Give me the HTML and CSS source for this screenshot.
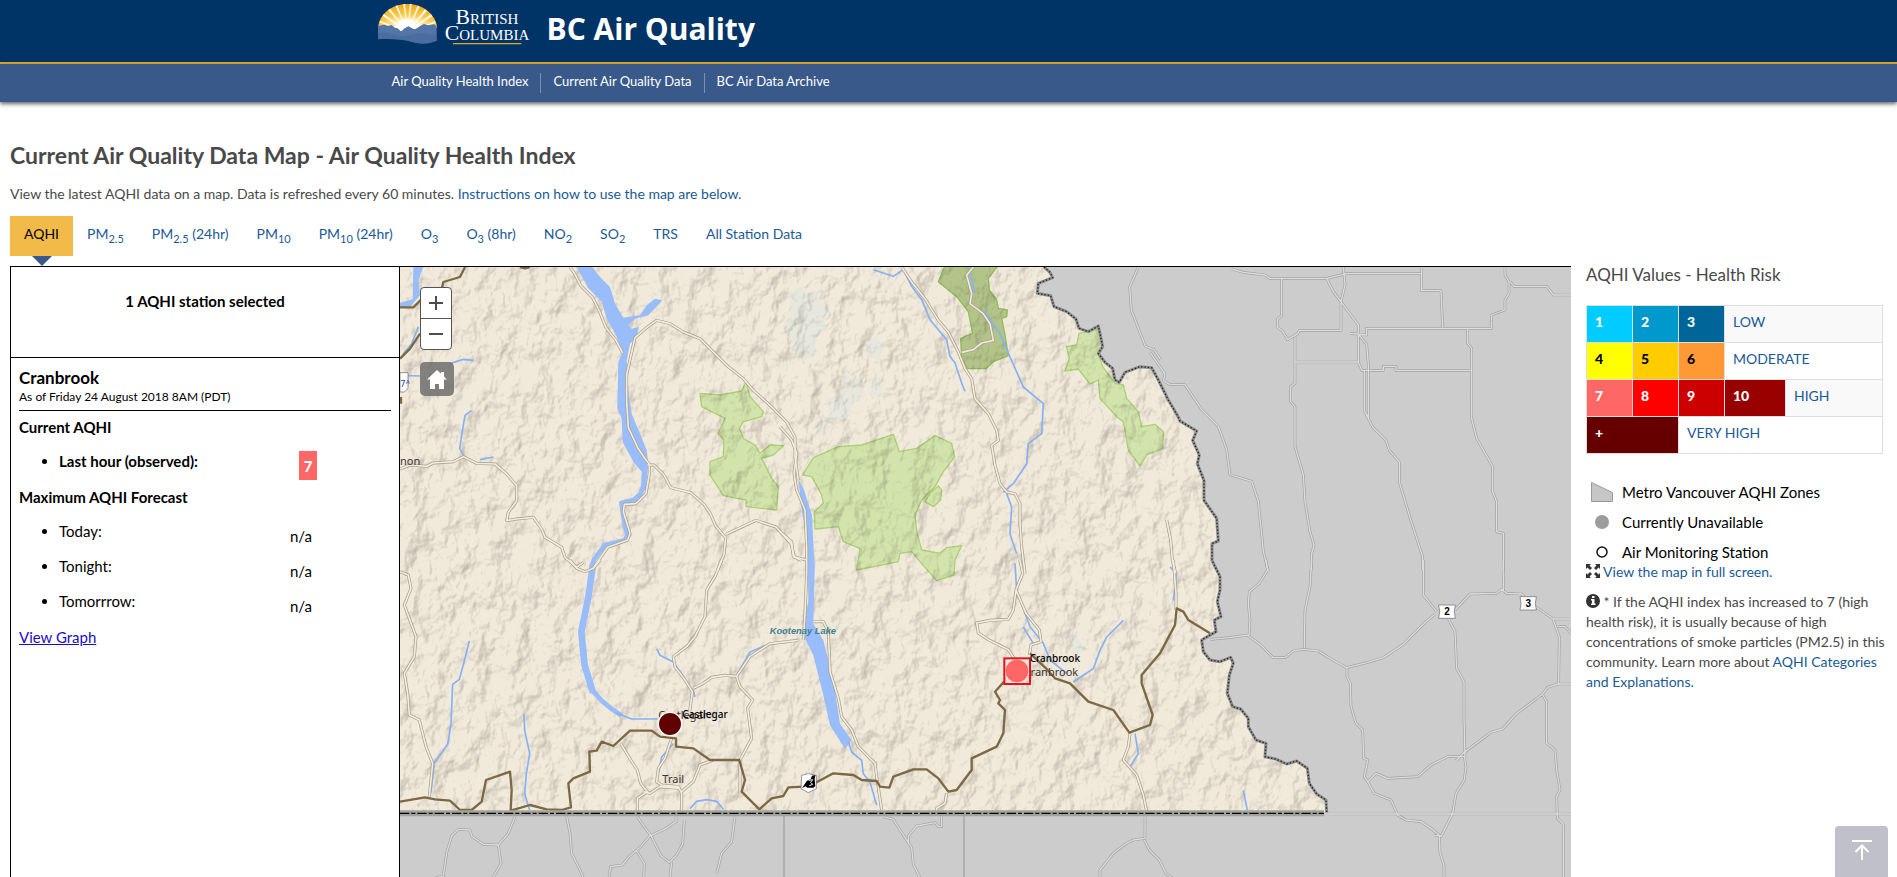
FILE: index.html
```
<!DOCTYPE html>
<html lang="en">
<head>
    <meta charset="UTF-8">
    <meta name="viewport" content="width=device-width, initial-scale=1.0">
    <title>BC Air Quality</title>
    <link rel="stylesheet" href="styles.css">
</head>
<body>
    <header class="header">
        <div class="container brand">
            <a href="#" class="logo" aria-label="British Columbia">
                <svg width="155" height="42" viewBox="0 0 465 126">
                    <defs>
                        <radialGradient id="sun" cx="50%" cy="85%" r="85%">
                            <stop offset="0.2" stop-color="#fff6c8"/>
                            <stop offset="0.5" stop-color="#fbc94a"/>
                            <stop offset="1" stop-color="#f0a81c"/>
                        </radialGradient>
                    </defs>
                    <path fill="url(#sun)" d="M0 72C4 30 40 0 88 0s84 30 90 72z"/>
                    <path fill="#fff" d="M88 84L6 50l-2 5zM88 84L18 30l-4 5zM88 84L36 14l-5 4zM88 84L58 4l-5 2zM88 84L81 0h-5zM88 84L96 0h5zM88 84l31-79 5 3zM88 84l53-68 5 5zM88 84l71-53 3 6zM88 84l83-32 2 5z"/>
                    <circle cx="88" cy="72" r="28" fill="#fff"/>
                    <path fill="#5475a7" d="M0 66l18-4 12 4 10-3 12 8 8 3 10 8 8-8 12-8 10 5 8 5 14-8 16-8 12 4 18-3 8 5v44c-24 10-46 12-74 4-30-8-62-10-102-8z"/>
                    <path fill="#fff" d="M48 70l12 3 8 8 10-8 14-7 10 6 12 2 14-10-14-4-20-12-12 2-10-4-12 10z"/>
                    <path fill="#3d5d93" d="M0 88c30-10 60 14 90 6s60-10 88 2v14c-24 10-46 12-74 4-30-8-62-10-104-8z" opacity=".35"/>
                    <text class="logo-text" x="327" y="61" text-anchor="middle">British</text>
                    <text class="logo-text" x="327" y="107" text-anchor="middle">Columbia</text>
                    <path fill="#e3a82b" d="M225 117h205v4H225z"/>
                </svg>
            </a>
            <span class="site-title">BC Air Quality</span>
        </div>
    </header>
    <nav class="main-nav">
        <ul class="container">
            <li><a href="#">Air Quality Health Index</a></li>
            <li><a href="#">Current Air Quality Data</a></li>
            <li><a href="#">BC Air Data Archive</a></li>
        </ul>
    </nav>

    <main class="content">
        <h1>Current Air Quality Data Map - Air Quality Health Index</h1>
        <p class="intro">View the latest AQHI data on a map. Data is refreshed every 60 minutes. <a href="#">Instructions on how to use the map are below.</a></p>

        <ul class="tabs">
            <li class="active"><a href="#">AQHI</a></li>
            <li><a href="#">PM<sub>2.5</sub></a></li>
            <li><a href="#">PM<sub>2.5</sub> (24hr)</a></li>
            <li><a href="#">PM<sub>10</sub></a></li>
            <li><a href="#">PM<sub>10</sub> (24hr)</a></li>
            <li><a href="#">O<sub>3</sub></a></li>
            <li><a href="#">O<sub>3</sub> (8hr)</a></li>
            <li><a href="#">NO<sub>2</sub></a></li>
            <li><a href="#">SO<sub>2</sub></a></li>
            <li><a href="#">TRS</a></li>
            <li><a href="#">All Station Data</a></li>
        </ul>

        <div class="columns">
            <section class="station-panel">
                <div class="panel-head">1 AQHI station selected</div>
                <div class="panel-body">
                    <h2>Cranbrook</h2>
                    <p class="as-of">As of Friday 24 August 2018 8AM (PDT)</p>
                    <h3>Current AQHI</h3>
                    <ul>
                        <li><div class="reading now"><b>Last hour (observed):</b><span class="badge">7</span></div></li>
                    </ul>
                    <h3>Maximum AQHI Forecast</h3>
                    <ul>
                        <li><div class="reading"><span>Today:</span><span>n/a</span></div></li>
                        <li><div class="reading"><span>Tonight:</span><span>n/a</span></div></li>
                        <li><div class="reading"><span>Tomorrrow:</span><span>n/a</span></div></li>
                    </ul>
                    <a href="#" class="graph-link">View Graph</a>
                </div>
            </section>

            <section class="map">
                <svg class="map-canvas" viewBox="0 0 3513 1830" preserveAspectRatio="xMinYMin slice">
                    <defs>
                        <path id="province" d="M1932 0l18 16 8 16-43 17-3 30 40 7 10 33 38 15 28 22 9 28 28 10 30-17 7 32 6 30-13 20 20 27 23 18 7 35 13 7 17-30 45-17 35 3 20 37 30 60 30 51 5 12 50 30-12 28 20 44-6 26 20 50v60l38 54 5 68-19 8v50l24 49v40l-8 35 11 45-20 10 5 35-43 25 5 35 20 25 30 5 32-13 8 18-12 35-6 55 16 40 24 7 23 28v25l23 40 30 10-3 40 35 8 30 14 30-9 32 22 6 45 22 32 28 18 2 37"/>
                        <clipPath id="land"><path d="M0 0H1932l18 16 8 16-43 17-3 30 40 7 10 33 38 15 28 22 9 28 28 10 30-17 7 32 6 30-13 20 20 27 23 18 7 35 13 7 17-30 45-17 35 3 20 37 30 60 30 51 5 12 50 30-12 28 20 44-6 26 20 50v60l38 54 5 68-19 8v50l24 49v40l-8 35 11 45-20 10 5 35-43 25 5 35 20 25 30 5 32-13 8 18-12 35-6 55 16 40 24 7 23 28v25l23 40 30 10-3 40 35 8 30 14 30-9 32 22 6 45 22 32 28 18 2 37H0z"/></clipPath>
                        <filter id="relief" x="0" y="0" width="100%" height="100%" color-interpolation-filters="sRGB">
                            <feTurbulence type="fractalNoise" baseFrequency=".016 .012" numOctaves="4" seed="8"/>
                            <feDiffuseLighting surfaceScale="22" diffuseConstant="1.15" lighting-color="#fff">
                                <feDistantLight azimuth="225" elevation="60"/>
                            </feDiffuseLighting>
                        </filter>
                        <g id="roads">
                            <g transform="translate(0 -6)">
                                <path d="M510 6l15 22 18 35 35 35 20 40 20 50 30 38 20 38"/>
                                <path d="M0 612l30-12 50 4 20-10 60-4 30-15 40 20 55 2 35 30 30 35v45l-25 35-5 25 30-5 50-5 25 35 10 25 25 15 25 15 10 30 35 30 20-15"/>
                                <path d="M578 912l45-65 60-22 7-20-20-65 3-22 35-2 30-30 10-60v-28l-15-20-20-30-28-60-5-80v-80l25-110 35-30 30-22 40 10 40 25 50 20 30 30 50 50 50 40 30 35 50 45 50 50 25 45v60l10 70"/>
                                <path d="M742 600h20l30 30 20 38 60 15 40 35 20 30 15 35 30 35-5 50-20 50M978 808l90-42 60 20 45 50 10 40 20 10"/>
                            </g>
                            <g transform="translate(1140 -6)">
                                <path d="M365 6l30 45 40 50 40 65 30 35 30 60 20 50 20 30 10 60 40 45 25 50 5 30-20 15 10 60 15 55 20 25 25 5 15 30v60l5 70 10 80"/>
                                <path d="M580 6l-20 25 15 55-5 30 40 30 20 30 10 50-35 8-25 20-35 8"/>
                                <path d="M0 485l35 40 15 40-8 60 8 50 25 60 5 110v80l-5 120-5 80M0 800l35 30 5 45 40 10M1160 765l12 60 5 60 10 40"/>
                            </g>
                            <g transform="translate(0 879)">
                                <path d="M0 35l25 10 8 40-20 50 35 95-5 60-30 50 10 60 5 65 30 15 20 80 20 50-10 100"/>
                                <path d="M510 0l20 25 25 10 25-10 20-25M965 0l-20 50-25 40-5 80-30 60-25 30-40 30 5 30 30 40 22 35-8 60M880 385l30-15 25-18 40-6 35 3 40-60 60-38 85-10M1010 350l10 30 38 40-15 25 12 90-35 65v100M662 550l30 50 20 30 10 40 20 25-30 20v40l10 15M815 535l-20 60-20 30-5 40 15 10 50 5 10 20v60M845 695l35-30 20-50 40-15M730 695l20 5 30-20 60 5"/>
                            </g>
                            <g transform="translate(1140 879)">
                                <path d="M720 0l8 40-20 50-8 60-15 28-55 3-40 8 5 30 30 20 60 30 20 30M708 90l30 70 40 50 5 35-30 10-5 30M1180 0l8 100v50M1050 520l-5 40-15 40 40 45 20 60 10 50"/>
                                <path d="M100 185h30l15 30 5 120 25 80 10 55 30 40 20 50 50 50 5 40 15 100M500 700l-5 30-25 15v20"/>
                            </g>
                        </g>
                        <g id="grey-roads">
                            <g transform="translate(0 879)">
                                <path d="M345 770l-20 50-30 35-45-2-35-25-5-18-35-2-20 20-15 50-10 70-40 10M295 855l8 55-25 45M500 770l10 50 5 60 25 50 10 25M712 770l20 30 20 25-30 35-35 30-20 25-35 5-5 30M828 770v15l-30 20-45 22 30 60 25 20 20-20 20-35 5-70M708 870l25 40-2 45M815 905l-5 50M1005 770l-10 75-30 35-15 60"/>
                            </g>
                            <g transform="translate(1140 879)">
                                <path d="M310 770l30 8 25 40 30 45 5 50 20 40M485 770v30h-10l-10-12-55 10-25 30v25M1095 770v65l-35 5-20 10-40 30-40 50v25M1093 840l15 30 30 30 20 40 20 15"/>
                            </g>
                            <g transform="translate(2340 879)">
                                <path d="M258 0l5 30-25 40-30 25-3 35 5 50-3 45-60 8-55 5M205 228l35 25 40 40h35l25-20 30-5 45 5 40 25 45 25 60-15 50-15 60-40 70-70 25-20M395 0l-5 80-15 70-2 115M730 0v105l40 50M805 175l20 40 5 110 22 40v110l3 115M825 150l45-48 80-2 15-12 15 12 45 2 30 30 65 45h50M970 0v95M1120 180l18 50-2 140M1135 200h20l18 20M1173 372h-40l-30 10-15 20-80 60-40 45-35 10-80 60-25 25M853 590h-50l-50 25-40 35-90 5-35-15-25 25 20 35 50 20 20 45 25 15 45 5 30 20 30 25 35-70 10-60 25-40 5-40zM563 665l-10-15 10-50-12-5-3-85-20-20-15-50-2-70-10-20v-25M763 827h15l2 50 12 40v34M1088 405l12 20v125l25 20 5 60 10 60-10 20 2 65 18 18v158"/>
                                <path d="M440 762h733"/>
                            </g>
                            <g transform="translate(2250 -6)">
                                <path d="M245 12l35 10 65 8 15 10h170l60-14h225V6M395 42v110l-12 10v25l15 12 15 25 30-18 5-10h125V110l12-50-5-54M530 40l20 40 75 100v28l25 30 5 60v160M600 205l50 5v-20h375v-40l40-15v-30l12-20V50L1065 30V6M1080 50l12 14h98l20 26h53M815 20v57h58l5 110M435 215v140l-13 10v45l13 15v120l25 85 5 80 15 90 12 40-8 30v45M435 291h190V210M625 291l10 25h65v-12h38v12h228M643 316v120l25 50 40 40 10 30 30 35v60l30 100 40 125v40M953 190v45l12 15v210l15 60 48 85v75l12 30v90l20 5v112M0 262l45 65-5 20 20 12h45l50 75 50 50 25 70 10 75 65 20 20 60 15 150 15 60"/>
                            </g>
                            <path d="M2215 0l-26 60 5 70 42 108 26 10 20 30"/>
                        </g>
                    </defs>

                    <rect width="3513" height="1830" fill="#ccc"/>
                    <g clip-path="url(#land)">
                        <rect width="3513" height="1830" fill="#f1e9da"/>
                        <g class="snow">
                            <path d="M1170 80l30-20 30 20 20-10 12 40 28 20-20 30 10 30-30 20-10 60-30 10-30-30-12-40-20-20 20-40z"/>
                            <path d="M1330 320l30 15 30-5-5 35 15 20-40 25-20 40-50 10-30 50-10-40 40-30-10-40 50-30zM1400 220l30-10 20 30-10 40-40-10zM1420 330l30 20-10 40-30-10zM2000 1100l40 20 20 30-40 10z"/>
                        </g>
                        <g class="park" transform="translate(0 -6)">
                            <path d="M900 385L960 390 1025 378 1038 350 1050 395 1090 440 1085 455 1030 470 1018 490 1030 520 1065 540 1080 565 1110 540 1150 542 1120 570 1085 580 1115 640 1135 665 1130 735 1038 725V705L970 692 930 630V590L970 575 972 525 955 505 975 460 905 425z"/>
                        </g>
                        <g class="park" transform="translate(1140 -6)">
                            <path d="M68 630L100 578 175 545 245 540 340 508 358 560 410 550 465 512 515 535 524 575 490 620 465 665 425 705 405 750 410 800 425 855 480 865 500 848 545 842 525 885 522 930 470 947 420 890 395 860 360 865 355 890 230 915 240 850 190 830 175 785 105 792 103 740 130 715 125 690 95 635z"/>
                            <path d="M435 710L450 685 475 663 485 675 482 705 460 725z"/>
                            <path d="M897 205L955 193 970 230 955 265 968 305 1005 355 1030 360 1040 400 1075 440 1085 485 1125 478 1150 500 1148 550 1100 570 1080 603 1045 555 1030 470 1010 455 960 400 955 345 930 357 895 312 855 318 868 280 860 245 890 240z"/>
                        </g>
                        <g class="park dark" transform="translate(1140 -6)">
                            <path d="M495 0H655L625 40 628 75 650 105 655 130 682 135 680 155 665 160 675 210 685 272 640 290 618 311H562L545 280 542 220 578 205 565 140 530 95 475 50z"/>
                        </g>
                        <rect class="relief" width="2800" height="1640" filter="url(#relief)"/>
                    </g>

                    <g class="water">
                        <path d="M530 0l35 64 40 40 15 50 30 55 18 45-13 30-3 140 13 30 3 70 32 60 25 30-3 65 15-12 8-77-5-40-20-50-25-60-10-70-5-90 10-50 20-20 7-30-22 5-10-10 20-20 40-10 42-45-22-5-25 20-20 30-50 7-25-42-15-50-25-25-25-30-30-59z"/>
                        <path d="M1196 640l15 25 25 80 8 160-4 165 30 50 30 120 20 130 35 50-20 25-45-70-20-90-30-120-30-60 15-100-2-170-20-120z"/>
                        <path d="M40 0h30l-15 40 5 45-30 35H0v-12l38-12z"/>
                        <g class="narrows">
                            <path d="M732 650l-10 30-20 18-38 10 8 50 10 48-8 14-60 15-32 42-8 25"/>
                            <path class="wide" d="M579 892l-13 93-22 110 10 100 25 82"/>
                            <path d="M575 1268l30 33 30 25 30 20"/>
                        </g>
                    </g>
                    <g class="river">
                        <path d="M150 290l40-13 30 3M215 430l-20 15-10 60-6 40 12 20M240 578l40-8M0 325l60 2M55 180l-20 50-25 30M650 1338l45 18h78"/>
                        <path d="M1420 8l60 20 30-20 25 50 30 40 25 60 50 60 10 50 15 20 20 60 10 25M1710 20l15 60M1750 130l50 70 30 70 40 90 60 50-5 90-40 30-5 60-40 60-30 25M1820 680l15 40-5 80 20 60M1845 889l5 80 40 110 40 50 20 50 50 40M1870 1080l30 50M2170 1060l-50 50-20 40-20 55-60 40M2310 900l20 20-10 80M2530 1570l12 60M2205 1400l10 60-25 40"/>
                        <path d="M208 1122l-15 60-15 55-20 15-5 120-10 60-40 55-10 90M372 1340l2 50 15 70-10 60-5 60 15 50M1345 1425l10 30 30 25 5 40 20 25 20 70M770 1145l10 20 40 20 35 50M1010 1225l40-70 60-25 60-5M880 1270l5 20M820 1430l-35 40-10 50M870 1625l20-22 30-5 30 5 20 24"/>
                    </g>

                    <use href="#roads" class="road-case"/>
                    <use href="#roads" class="road-core"/>
                    <use href="#grey-roads" class="grey-case"/>
                    <use href="#grey-roads" class="grey-core"/>
                    <path class="county" d="M1152 1640v190M1692 1640v190"/>

                    <g class="highway" clip-path="url(#land)">
                        <path d="M195 0l-15 30-50 15-10 45M0 121h40l30-30M60 200l-30 45-30 30M360 0l15 4 15-4M3 390v20"/>
                        <g transform="translate(0 879)">
                            <path d="M0 725L75 712 105 718 150 722 180 750H215L245 725 258 660 330 635 335 690 332 752 390 735 440 748 485 750 513 742 505 670 520 655 570 635 568 575 590 572 605 545 640 558 690 512H755L780 530 828 535V560L880 565 930 600H1018L1035 660 1025 695 1078 748 1115 715 1150 708 1165 682 1210 680"/>
                        </g>
                        <g transform="translate(1140 879)">
                            <path d="M70 680L100 672 160 640 220 645 245 660 290 663 300 680 328 683 340 650 400 628H440L475 655 505 695 530 690 575 630V595L650 560 670 520 675 450 655 430 660 420 645 395 672 365"/>
                            <path d="M750 280L795 322 825 355 870 370 925 425 1000 450 1048 518 1110 495 1118 465 1085 370V345L1140 280 1185 195 1190 145 1210 155 1225 180 1290 220"/>
                        </g>
                    </g>

                    <use href="#province" class="border-band"/>
                    <use href="#province" class="border-dots"/>
                    <path class="border-band south" d="M0 1639h2772"/>
                    <path class="border-dash" d="M0 1639h2772"/>

                    <path class="shield" d="M0 317h24v48l-12 10H0z"/>
                    <text class="shield-letter" x="0" y="360">7ᴬ</text>
                    <path class="shield" d="M1205 1525l20-5 24 5v40l-24 12-22-12z"/>
                    <path d="M1206 1564l14-22 12-6 4-10 10-2-2 14 2 20-6 4h-18l-6-4z"/>
                    <path fill="none" stroke="#fff" stroke-width="3" d="M1226 1540l12-2-6 8 6 6-10 4"/>
                    <path class="shield" d="M3116 1014h50l-3 20 3 20h-50l3-20zM3360 989h49l-3 20 3 20h-49l3-20z"/>
                    <text class="shield-text" x="3141" y="1044">2</text>
                    <text class="shield-text" x="3385" y="1019">3</text>

                    <text class="town" x="0" y="593">non</text>
                    <text class="town" x="787" y="1549">Trail</text>
                    <text class="town" x="775" y="1355">Castlegar</text>
                    <text class="town" x="1871" y="1226">Cranbrook</text>
                    <text class="lake" x="1109" y="1100">Kootenay Lake</text>

                    <circle cx="810" cy="1371" r="35" fill="#600000" stroke="#fff" stroke-width="4"/>
                    <text class="station" x="847" y="1352">Castlegar</text>
                    <circle cx="1851" cy="1212" r="36" fill="#ff6666" stroke="#fff" stroke-width="3"/>
                    <rect x="1813" y="1174" width="77" height="77" fill="none" stroke="#e8121b" stroke-width="6"/>
                    <text class="station" x="1889" y="1186">Cranbrook</text>
                </svg>
                <div class="zoom">
                    <button type="button" aria-label="Zoom in"><svg width="16" height="16" viewBox="0 0 16 16"><path d="M1 8h14M8 1v14"/></svg></button>
                    <button type="button" aria-label="Zoom out"><svg width="16" height="16" viewBox="0 0 16 16"><path d="M1 8h14"/></svg></button>
                </div>
                <button type="button" class="home" aria-label="Default extent">
                    <svg width="20" height="20" viewBox="0 0 20 20"><path fill="#fff" d="M10 1L0 10.500h3V20h5v-5h4v5h5v-9.500h3l-3-3V3h-3v1.800z"/></svg>
                </button>
            </section>

            <aside class="legend">
                <h4>AQHI Values - Health Risk</h4>
                <table>
                    <tr>
                        <td class="v1">1</td><td class="v2">2</td><td class="v3">3</td>
                        <td colspan="2"><a href="#">LOW</a></td>
                    </tr>
                    <tr>
                        <td class="v4">4</td><td class="v5">5</td><td class="v6">6</td>
                        <td colspan="2"><a href="#">MODERATE</a></td>
                    </tr>
                    <tr>
                        <td class="v7">7</td><td class="v8">8</td><td class="v9">9</td><td class="v10">10</td>
                        <td><a href="#">HIGH</a></td>
                    </tr>
                    <tr>
                        <td class="v11" colspan="2">+</td>
                        <td colspan="3"><a href="#">VERY HIGH</a></td>
                    </tr>
                </table>
                <ul class="symbols">
                    <li><svg width="22" height="22" viewBox="0 0 22 22"><path d="M.5 1.500l21 10v9H.5z" fill="#c6c6c6" stroke="#9a9a9a"/></svg>Metro Vancouver AQHI Zones</li>
                    <li><svg width="22" height="22" viewBox="0 0 22 22"><circle cx="11" cy="11" r="7" fill="#9c9c9c"/></svg>Currently Unavailable</li>
                    <li><svg width="22" height="22" viewBox="0 0 22 22"><circle cx="11" cy="11" r="5" fill="none" stroke="#111" stroke-width="1.500"/></svg>Air Monitoring Station</li>
                </ul>
                <p class="fullscreen">
                    <svg width="14" height="14" viewBox="0 0 14 14" fill="#333"><path d="M0 0h5L3.500 1.500 6 4 4 6 1.500 3.500 0 5zM14 0v5l-1.500-1.500L10 6 8 4l2.500-2.500L9 0zM0 14V9l1.500 1.500L4 8l2 2-2.500 2.500L5 14zM14 14H9l1.500-1.500L8 10l2-2 2.500 2.500L14 9z"/></svg>
                    <a href="#">View the map in full screen.</a>
                </p>
                <p class="note">
                    <svg width="14" height="14" viewBox="0 0 14 14"><circle cx="7" cy="7" r="7" fill="#333"/><path fill="#fff" d="M6 2h2.500v2H6zM5 5h3.500v4.500h1V11H5V9.500h1v-3H5z"/></svg>
                    * If the AQHI index has increased to 7 (high health risk), it is usually because of high concentrations of smoke particles (PM2.5) in this community. Learn more about <a href="#">AQHI Categories and Explanations.</a>
                </p>
            </aside>
        </div>
    </main>

    <button type="button" class="back-top" aria-label="Back to top">
        <svg width="22" height="22" viewBox="0 0 22 22"><path d="M1 2h20M11 21V7M4.500 13L11 6.500l6.500 6.500"/></svg>
    </button>
</body>
</html>
```

FILE: styles.css
```
* {
    box-sizing: border-box;
}

body {
    margin: 0;
    height: 100vh;
    display: flex;
    flex-direction: column;
    overflow: hidden;
    font-family: 'Lato', sans-serif;
    font-size: 14px;
    line-height: 20px;
    color: #494949;
    background-color: #fff;
}

ul {
    margin: 0;
    padding: 0;
    list-style: none;
}

a {
    color: #1a5a96;
    text-decoration: none;
}

button {
    padding: 0;
    cursor: pointer;
}

.container {
    width: 100%;
    max-width: 1170px;
    margin: 0 auto;
    padding: 0 14px;
}

/* Header */
.header {
    background-color: #003366;
    border-bottom: 2px solid #e3a82b;
}

.brand {
    display: flex;
    gap: 14px;
    height: 62px;
    padding-top: 4px;
}

.logo-text {
    font-family: 'Liberation Serif', serif;
    font-size: 65px;
    font-variant: small-caps;
    fill: #fff;
}

.site-title {
    font-family: 'Open Sans', sans-serif;
    font-size: 30px;
    font-weight: 700;
    line-height: 50px;
    color: #fff;
}

.main-nav {
    background-color: #38598a;
    box-shadow: 0 2px 4px rgba(0, 0, 0, 0.6);
}

.main-nav ul {
    display: flex;
    align-items: center;
    height: 38px;
    padding: 0 16px;
}

.main-nav li {
    height: 20px;
    line-height: 16px;
}

.main-nav li + li {
    border-left: 1px solid #7b8fb0;
}

.main-nav a {
    padding: 0 12px;
    font-size: 13px;
    color: #fff;
}

/* Page content */
.content {
    flex: 1;
    min-height: 0;
    display: flex;
    flex-direction: column;
}

h1 {
    margin: 38px 10px 12px;
    font-size: 23px;
    font-weight: 700;
    line-height: 30px;
}

.intro {
    margin: 2px 10px 12px;
}

.tabs {
    display: flex;
    padding: 0 10px;
    margin-bottom: 10px;
}

.tabs a {
    display: block;
    height: 40px;
    padding: 8px 14px;
}

.tabs .active {
    position: relative;
    background-color: #f2ba49;
}

.tabs .active a {
    color: #000;
}

.tabs .active::after {
    content: '';
    position: absolute;
    top: 100%;
    left: 50%;
    margin-left: -10px;
    border: 10px solid transparent;
    border-top-color: #38598a;
    border-bottom: 0;
}

sub {
    font-size: 11px;
    line-height: 0;
}

.columns {
    flex: 1;
    min-height: 0;
    display: grid;
    grid-template-columns: 390px 1fr 326px;
    padding-left: 10px;
}

/* Selected station */
.station-panel {
    border: 1px solid #000;
    border-bottom: 0;
    font-size: 15px;
    color: #000;
}

.panel-head {
    height: 91px;
    padding-top: 24px;
    border-bottom: 1px solid #000;
    font-weight: 700;
    text-align: center;
}

.panel-body {
    padding: 9px 8px;
}

.panel-body h2 {
    margin: 0;
    font-size: 17px;
    line-height: 22px;
}

.as-of {
    margin: 0 0 6px;
    padding-bottom: 5px;
    border-bottom: 1px solid #000;
    font-size: 12px;
    line-height: 16px;
}

.panel-body h3 {
    margin: 0;
    font-size: 15px;
    line-height: 20px;
}

.panel-body ul {
    margin: 7px 0 8px;
    padding-left: 40px;
    list-style: disc;
}

.reading {
    display: grid;
    grid-template-columns: 231px 1fr;
    height: 35px;
    padding-top: 7px;
}

.reading span:last-child {
    padding-top: 5px;
}

.reading.now {
    grid-template-columns: 240px 18px;
}

.reading .badge {
    height: 29px;
    background-color: #ff6666;
    font-weight: 900;
    text-align: center;
    color: #fff;
}

.graph-link {
    color: #1a0dc8;
    text-decoration: underline;
}

/* Map */
.map {
    position: relative;
    min-width: 0;
    border-top: 1px solid #000;
    overflow: hidden;
}

.map-canvas {
    display: block;
    width: 100%;
    height: 100%;
}

.map-canvas path,
.map-canvas use {
    stroke-linejoin: round;
}

.relief {
    mix-blend-mode: multiply;
    opacity: 0.26;
}

.snow {
    fill: #e2e6e0;
    opacity: 0.6;
}

.park {
    fill: #d2e3ab;
    stroke: #acd173;
    stroke-width: 4;
}

.park.dark {
    fill: #b3c489;
    stroke: #8fbc5a;
}

.water {
    fill: #99bcfa;
}

.narrows {
    fill: none;
    stroke: #99bcfa;
    stroke-width: 14;
}

.narrows .wide {
    stroke-width: 20;
}

.river {
    fill: none;
    stroke: #86b1f5;
    stroke-width: 5;
}

.road-case,
.road-core,
.grey-case,
.grey-core {
    fill: none;
}

.road-case {
    stroke: #a39c8c;
    stroke-width: 9;
}

.road-core {
    stroke: #f3ebdc;
    stroke-width: 5;
}

.grey-case {
    stroke: #a2a2a2;
    stroke-width: 8;
}

.grey-core {
    stroke: #dcdcdc;
    stroke-width: 4;
}

.county {
    fill: none;
    stroke: #949494;
    stroke-width: 3;
}

.highway {
    fill: none;
    stroke: #7c6843;
    stroke-width: 7;
}

.border-band {
    fill: none;
    stroke: #8c8c8c;
    stroke-width: 9;
}

.border-band.south {
    stroke: #a3a39d;
    stroke-width: 18;
}

.border-dots {
    fill: none;
    stroke: #222;
    stroke-width: 4;
    stroke-dasharray: 4 6;
}

.border-dash {
    fill: none;
    stroke: #000;
    stroke-width: 4;
    stroke-dasharray: 28 6 12 6;
}

.shield {
    fill: #fff;
    stroke: #666;
    stroke-width: 2;
}

.shield-text {
    font-family: 'Liberation Sans', sans-serif;
    font-size: 30px;
    font-weight: 700;
    text-anchor: middle;
}

.shield-letter {
    font-family: 'DejaVu Sans', sans-serif;
    font-size: 27px;
    fill: #2d4fb0;
}

.town {
    font-family: 'Noto Sans', sans-serif;
    font-size: 33px;
    fill: #3c3630;
}

.station {
    font-family: 'Noto Sans', sans-serif;
    font-size: 30px;
    font-weight: 500;
    fill: #000;
}

.lake {
    font-family: 'Liberation Sans', sans-serif;
    font-size: 28px;
    font-weight: 700;
    font-style: italic;
    fill: #40808f;
}

.zoom {
    position: absolute;
    top: 20px;
    left: 20px;
    width: 32px;
    border: 1px solid #555;
    border-radius: 4px;
    background-color: #fff;
    overflow: hidden;
}

.zoom button {
    display: flex;
    align-items: center;
    justify-content: center;
    width: 30px;
    height: 30px;
    border: 0;
    background: none;
}

.zoom button + button {
    height: 31px;
    border-top: 1px solid #555;
}

.zoom svg {
    stroke: #4c4c4c;
    stroke-width: 2;
}

.home {
    position: absolute;
    top: 95px;
    left: 20px;
    display: flex;
    align-items: center;
    justify-content: center;
    width: 34px;
    height: 34px;
    border: 0;
    border-radius: 5px;
    background-color: rgba(102, 102, 102, 0.8);
}

/* Legend */
.legend {
    padding: 0 14px 0 15px;
}

.legend h4 {
    margin: 0 0 21px;
    font-size: 17px;
    font-weight: 400;
    line-height: 18px;
}

.legend table {
    width: 100%;
    border: 1px solid #ddd;
    border-collapse: collapse;
}

.legend tr:nth-child(odd) {
    background-color: #f9f9f9;
}

.legend td {
    height: 37px;
    padding: 0 8px 4px;
    border-top: 1px solid #ddd;
}

.legend td[class] {
    width: 46px;
    border: 1px solid #ddd;
    font-weight: 900;
    color: #fff;
}

.legend td.v10 {
    width: 61px;
}

.v1 { background-color: #00ccff; }
.v2 { background-color: #0099cc; }
.v3 { background-color: #006699; }
.v4 { background-color: #ffff00; }
.v5 { background-color: #ffcc00; }
.v6 { background-color: #ff9933; }
.v7 { background-color: #ff6666; }
.v8 { background-color: #ff0000; }
.v9 { background-color: #cc0000; }
.v10 { background-color: #990000; }
.v11 { background-color: #660000; }

.legend td.v4,
.legend td.v5,
.legend td.v6 {
    color: #000;
}

.symbols {
    display: flex;
    flex-direction: column;
    gap: 6px;
    margin-top: 26px;
    font-size: 15px;
    color: #000;
}

.symbols li {
    display: flex;
    align-items: center;
    gap: 9px;
    height: 24px;
    padding-left: 5px;
}

.legend p {
    margin: 0 0 11px;
}

.legend p svg {
    vertical-align: -1px;
}

.legend .fullscreen {
    margin-bottom: 13px;
    line-height: 14px;
}

.legend .note {
    margin-right: -8px;
}

/* Back to top */
.back-top {
    position: fixed;
    right: 9px;
    bottom: 0;
    width: 53px;
    height: 51px;
    border: 0;
    border-radius: 4px 4px 0 0;
    background-color: #bfc0c9;
}

.back-top svg {
    fill: none;
    stroke: #fff;
    stroke-width: 2;
}
```
